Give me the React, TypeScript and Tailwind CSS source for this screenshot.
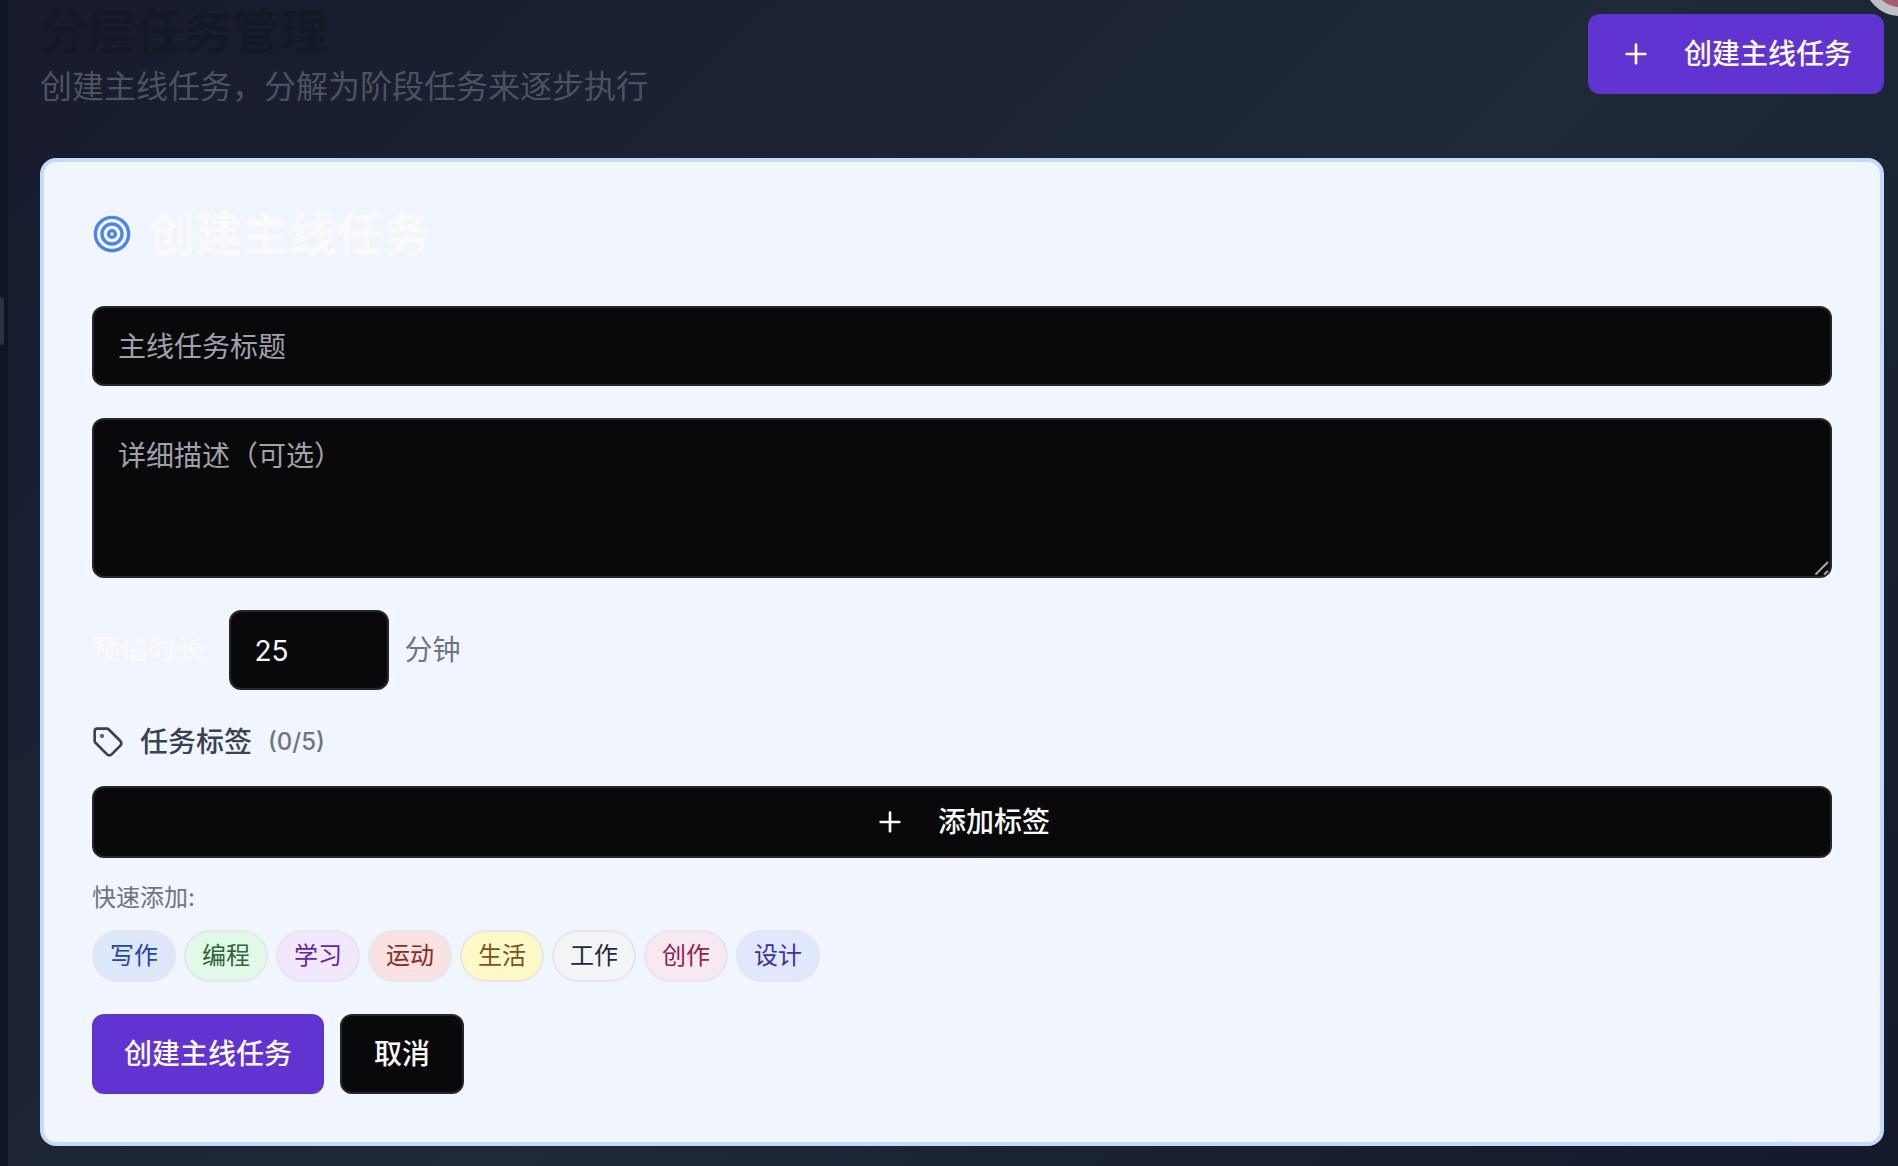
import { Plus, Tag, Target } from "lucide-react";

const quickTags = [
  { name: "写作", style: "bg-[#dde8fa] text-[#2443a8]" },
  { name: "编程", style: "bg-[#e1fae8] text-[#32643a]" },
  { name: "学习", style: "bg-[#f1e8fd] text-[#6227a3]" },
  { name: "运动", style: "bg-[#f9e3e2] text-[#8e2822]" },
  { name: "生活", style: "bg-[#fdf8c8] text-[#7f4f1c]" },
  { name: "工作", style: "bg-[#f3f4f6] text-[#1f2937]" },
  { name: "创作", style: "bg-[#f8e8f2] text-[#8f2349]" },
  { name: "设计", style: "bg-[#e1e7fd] text-[#3a32a0]" },
];

const field =
  "rounded-xl border-2 border-[#27272a] bg-[#09090b] px-6 text-[28px] leading-10 text-[#fafafa] placeholder:text-[#a1a1aa] outline-none";

const darkButton =
  "flex items-center justify-center rounded-xl border-2 border-[#27272a] bg-[#09090b] text-[28px] leading-10 font-medium text-[#fafafa]";

const primaryButton =
  "flex h-20 items-center justify-center gap-8 rounded-xl bg-[#6133d0] px-8 text-[28px] leading-10 font-medium text-[#fafafa]";

export default function App() {
  return (
    <div className="relative flex min-h-screen overflow-hidden bg-linear-135 from-[#171b2d] via-[#1f2938] via-54% to-[#141a2b] font-['Inter','Noto_Sans_CJK_SC',sans-serif]">
      <aside className="flex w-2 shrink-0 items-start bg-[#0e1524]">
        <div className="mt-[297px] h-12 w-1 rounded-r-sm bg-[#2b3042]" />
      </aside>

      <main className="min-w-0 flex-1 pr-3.5 pb-5 pl-8">
        <header className="mb-12 flex items-start justify-between">
          <div>
            <h1 className="text-5xl leading-[64px] font-bold text-[#131926]">分层任务管理</h1>
            <p className="text-[32px] leading-[46px] text-[#4b5260]">
              创建主线任务，分解为阶段任务来逐步执行
            </p>
          </div>
          <div className="pt-3.5">
            <button type="button" className={primaryButton}>
              <Plus size={32} />
              创建主线任务
            </button>
          </div>
        </header>

        <form
          className="flex flex-col gap-8 rounded-2xl border-4 border-[#c4dafc] bg-[#f0f5fe] p-12"
          onSubmit={(e) => e.preventDefault()}
        >
          <h2 className="mb-4 flex items-center gap-4 text-[47px] leading-12 font-semibold text-[#fafafa]">
            <Target size={40} className="text-[#4d83ec]" />
            创建主线任务
          </h2>

          <input
            type="text"
            aria-label="主线任务标题"
            placeholder="主线任务标题"
            className={`h-20 w-full pt-0.5 ${field}`}
          />

          <div className="relative flex">
            <textarea
              aria-label="详细描述（可选）"
              placeholder="详细描述（可选）"
              className={`h-40 w-full resize-none py-4 ${field}`}
            />
            <svg
              viewBox="0 0 16 16"
              aria-hidden="true"
              className="absolute right-0.5 bottom-0.5 size-4 fill-none stroke-[#a6a6a6] stroke-2"
            >
              <path d="M1.5 14.5 14 2M10 14.5l4-3.8" />
            </svg>
          </div>

          <div className="flex items-center gap-4 text-[28px] leading-10">
            <label htmlFor="duration" className="font-medium text-[#fafafa]">
              预估时长:
            </label>
            <input
              id="duration"
              type="text"
              inputMode="numeric"
              defaultValue="25"
              className={`h-20 w-40 pt-0.5 ${field}`}
            />
            <span className="text-[#6f7480]">分钟</span>
          </div>

          <section className="flex flex-col gap-6">
            <div className="flex items-center gap-4 text-[28px] leading-10 font-medium text-[#3a4252]">
              <Tag size={32} />
              <span>任务标签</span>
              <span className="text-2xl text-[#6f7480]">(0/5)</span>
            </div>
            <button type="button" className={`h-18 w-full gap-8 ${darkButton}`}>
              <Plus size={32} />
              添加标签
            </button>
            <div className="flex flex-col gap-4 text-2xl leading-8">
              <p className="text-[#6f7480]">快速添加:</p>
              <div className="flex flex-wrap gap-2">
                {quickTags.map((tag) => (
                  <button
                    key={tag.name}
                    type="button"
                    className={`rounded-full border-2 border-[#e5e7eb] px-4 py-2 ${tag.style}`}
                  >
                    {tag.name}
                  </button>
                ))}
              </div>
            </div>
          </section>

          <div className="flex gap-4">
            <button type="submit" className={primaryButton}>
              创建主线任务
            </button>
            <button type="button" className={`h-20 px-8 ${darkButton}`}>
              取消
            </button>
          </div>
        </form>
      </main>

      <div className="absolute -top-14 -right-[38px] size-[72px] rounded-full border-9 border-[#bfc0c6] bg-[#a55b70]" />
    </div>
  );
}
